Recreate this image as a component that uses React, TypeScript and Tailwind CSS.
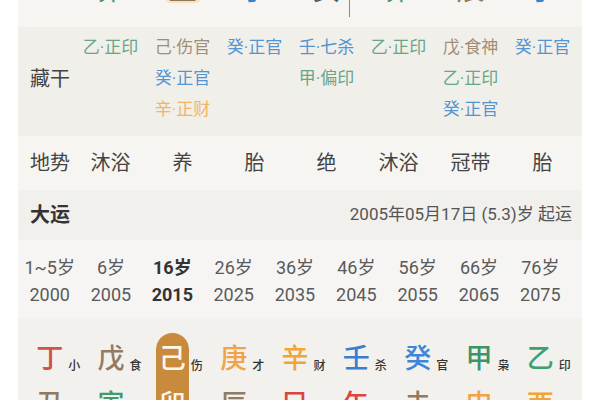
const hidden = [
  [{ t: "乙·正印", c: "text-[#66a68c]" }],
  [
    { t: "己·伤官", c: "text-[#a08e78]" },
    { t: "癸·正官", c: "text-[#5295d2]" },
    { t: "辛·正财", c: "text-[#f0b565]" },
  ],
  [{ t: "癸·正官", c: "text-[#5295d2]" }],
  [
    { t: "壬·七杀", c: "text-[#5295d2]" },
    { t: "甲·偏印", c: "text-[#66a68c]" },
  ],
  [{ t: "乙·正印", c: "text-[#66a68c]" }],
  [
    { t: "戊·食神", c: "text-[#a08e78]" },
    { t: "乙·正印", c: "text-[#66a68c]" },
    { t: "癸·正官", c: "text-[#5295d2]" },
  ],
  [{ t: "癸·正官", c: "text-[#5295d2]" }],
];

const topBranches = [
  { t: "卯", c: "text-[#3f9a6e]" },
  { t: "丑", c: "text-[#8f7a60]" },
  { t: "子", c: "text-[#3a7fd0]" },
  { t: "亥", c: "text-[#4a5f78]" },
  { t: "卯", c: "text-[#3f9a6e]" },
  { t: "辰", c: "text-[#8f7a60]" },
  { t: "子", c: "text-[#3a7fd0]" },
];

const terrain = ["沐浴", "养", "胎", "绝", "沐浴", "冠带", "胎"];

const ages = [
  ["1~5岁", "2000"],
  ["6岁", "2005"],
  ["16岁", "2015"],
  ["26岁", "2025"],
  ["36岁", "2035"],
  ["46岁", "2045"],
  ["56岁", "2055"],
  ["66岁", "2065"],
  ["76岁", "2075"],
];

const luck = [
  { s: "丁", sl: "小", sc: "text-[#d2524b]", b: "丑", bl: "运", bc: "text-[#8f7a60]" },
  { s: "戊", sl: "食", sc: "text-[#917b62]", b: "寅", bl: "食", bc: "text-[#3f9a6e]" },
  { s: "己", sl: "伤", sc: "text-[#fff7e8]", b: "卯", bl: "印", bc: "text-[#fff7e8]" },
  { s: "庚", sl: "才", sc: "text-[#eea448]", b: "辰", bl: "食", bc: "text-[#917b62]" },
  { s: "辛", sl: "财", sc: "text-[#f0a635]", b: "巳", bl: "比", bc: "text-[#d9463f]" },
  { s: "壬", sl: "杀", sc: "text-[#3a7fcf]", b: "午", bl: "劫", bc: "text-[#d9463f]" },
  { s: "癸", sl: "官", sc: "text-[#3d86d8]", b: "未", bl: "伤", bc: "text-[#917b62]" },
  { s: "甲", sl: "枭", sc: "text-[#3c9468]", b: "申", bl: "才", bc: "text-[#eea448]" },
  { s: "乙", sl: "印", sc: "text-[#3ea06f]", b: "酉", bl: "财", bc: "text-[#f0a635]" },
];

function Glyph({ ch, label, color }: { ch: string; label: string; color: string }) {
  return (
    <div className="flex h-[46px] items-center justify-center">
      <span className={`relative text-[27px] font-medium leading-none ${color}`}>
        {ch}
        <span className="absolute bottom-[1px] left-full ml-[5px] text-[12px] font-medium leading-none text-[#333]">
          {label}
        </span>
      </span>
    </div>
  );
}

export default function App() {
  return (
    <div className="h-[400px] w-[600px] overflow-hidden bg-white font-['Roboto','Noto_Sans_CJK_SC',sans-serif]">
      <div className="mx-[18px] flex flex-col">
        {/* cut-off branch row */}
        <div className="relative h-[27px] overflow-hidden bg-[#f6f5f2] pl-[64px]">
          <div className="-mt-[24px] grid grid-cols-[repeat(7,57px)] gap-x-[15px]">
            {topBranches.map((b, i) => (
              <div key={i} className="relative flex justify-center">
                {i === 1 && <div className="absolute top-[18px] h-[9px] w-[36px] rounded-b-md bg-[#f6e3b8]" />}
                <span className={`relative text-[28px] leading-[30px] ${b.c}`}>{b.t}</span>
              </div>
            ))}
          </div>
          <div className="absolute left-[331px] top-0 h-[17px] w-px bg-[#8a8a8a]" />
        </div>

        {/* 藏干 */}
        <div className="flex h-[109px] items-start bg-[#f1efe9] pl-3 pt-[5px]">
          <div className="flex h-[93px] w-[52px] items-center text-[20px] text-[#444]">藏干</div>
          <div className="grid grid-cols-[repeat(7,57px)] gap-x-[15px]">
            {hidden.map((col, i) => (
              <div key={i} className="flex flex-col">
                {col.map((h, j) => (
                  <div key={j} className={`h-[31px] whitespace-nowrap text-center text-[17px] leading-[31px] ${h.c}`}>
                    {h.t}
                  </div>
                ))}
              </div>
            ))}
          </div>
        </div>

        {/* 地势 */}
        <div className="flex h-[54px] items-center bg-[#f6f5f2] pl-3">
          <div className="w-[52px] text-[20px] text-[#444]">地势</div>
          <div className="grid grid-cols-[repeat(7,57px)] gap-x-[15px]">
            {terrain.map((t, i) => (
              <div key={i} className="text-center text-[20px] text-[#444]">
                {t}
              </div>
            ))}
          </div>
        </div>

        {/* 大运 */}
        <div className="flex h-[50px] items-center justify-between bg-[#f1f0ec] pl-3 pr-[10px]">
          <div className="text-[20px] font-bold text-[#333]">大运</div>
          <div className="text-[17px] text-[#555]">2005年05月17日 (5.3)岁 起运</div>
        </div>

        <div className="grid h-[78px] grid-cols-9 bg-[#f6f5f3] pl-[1px] pr-[11px] pt-[14px]">
          {ages.map(([a, y], i) => (
            <div
              key={i}
              className={`flex flex-col items-center text-[18px] leading-[27px] ${
                i === 2 ? "font-bold text-[#333]" : "text-[#5a5a5a]"
              }`}
            >
              <span>{a}</span>
              <span>{y}</span>
            </div>
          ))}
        </div>

        <div className="grid h-[82px] grid-cols-9 bg-[#f3f1ed] pl-[1px] pr-[11px] pt-[15px]">
          {luck.map((l, i) => (
            <div key={i} className="flex justify-center">
              <div className={`flex w-[33px] flex-col items-stretch pt-[3px] ${i === 2 ? "rounded-t-full bg-[#c88a3c]" : ""}`}>
                <Glyph ch={l.s} label={l.sl} color={l.sc} />
                <Glyph ch={l.b} label={l.bl} color={l.bc} />
              </div>
            </div>
          ))}
        </div>
      </div>
    </div>
  );
}
